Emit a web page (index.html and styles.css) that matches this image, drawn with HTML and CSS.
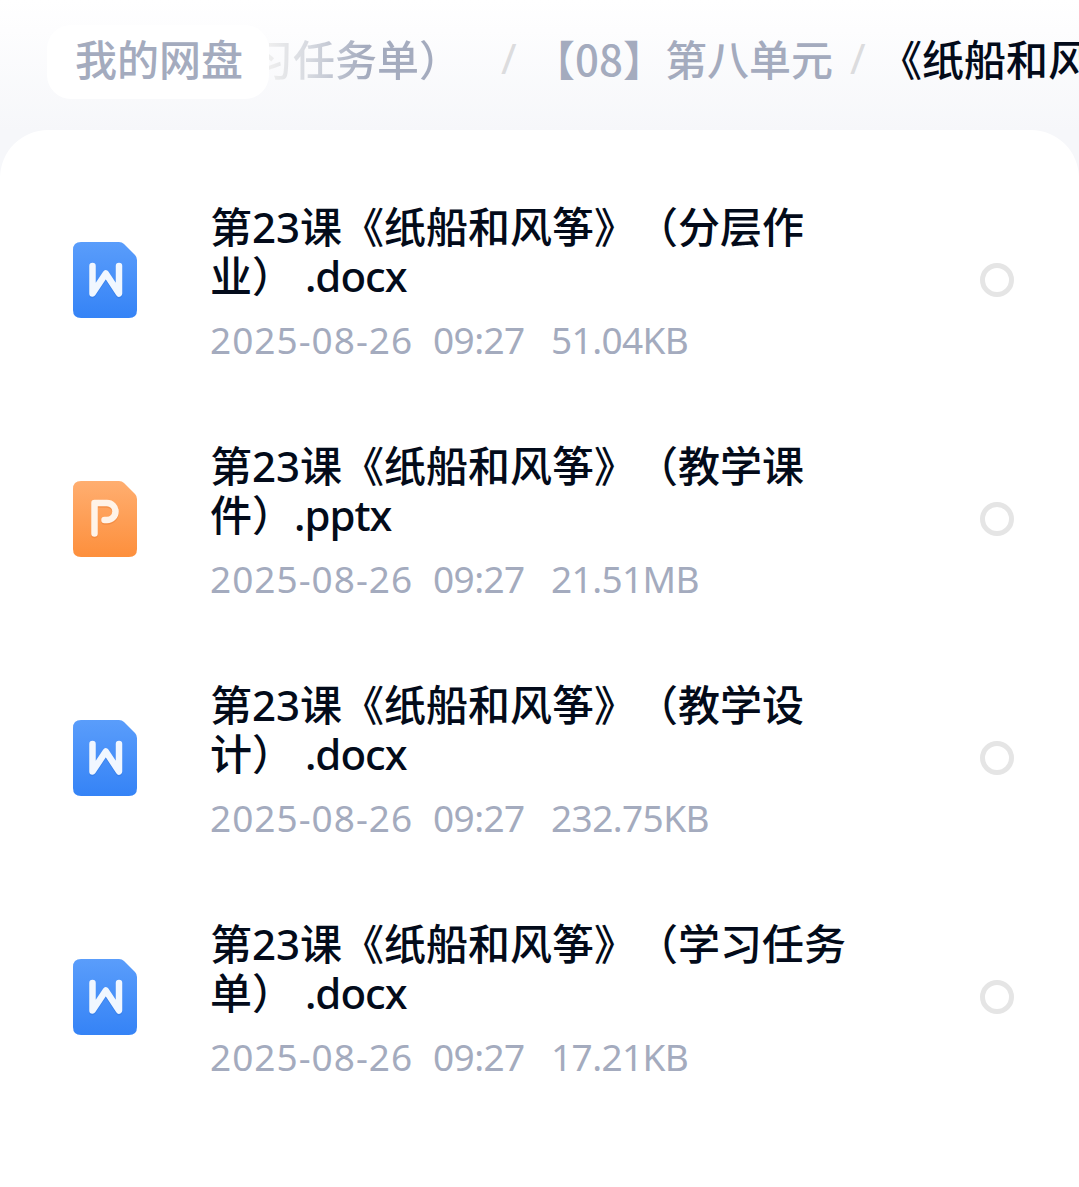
FILE: index.html
```
<!DOCTYPE html>
<html lang="zh-CN">
<head>
	<meta charset="UTF-8">
	<title>我的网盘</title>
	<link rel="stylesheet" href="styles.css">
</head>
<body>
<!-- 图标定义 -->
<svg class="defs" width="0" height="0">
	<defs>
		<linearGradient id="blue" x1="0" y1="0" x2="0" y2="1">
			<stop offset="0" stop-color="#5a9dfb"/>
			<stop offset="1" stop-color="#3583f6"/>
		</linearGradient>
		<linearGradient id="orange" x1="0" y1="0" x2="0" y2="1">
			<stop offset="0" stop-color="#ffae70"/>
			<stop offset="1" stop-color="#fd8f3c"/>
		</linearGradient>
	</defs>
	<symbol id="doc" viewBox="0 0 64 76">
		<path fill="url(#blue)" d="M8 0H46Q49 0 51 2L62 13Q64 15 64 18V68Q64 76 56 76H8Q0 76 0 68V8Q0 0 8 0Z"/>
		<path class="shade" d="M19.500 25.500V53L32.800 33L46 53V25.500"/>
		<path class="letter" d="M19.500 24V51.500L32.800 31.500L46 51.500V24"/>
	</symbol>
	<symbol id="ppt" viewBox="0 0 64 76">
		<path fill="url(#orange)" d="M8 0H46Q49 0 51 2L62 13Q64 15 64 18V68Q64 76 56 76H8Q0 76 0 68V8Q0 0 8 0Z"/>
		<path class="shade orange" d="M21.500 54V23.500H34A8.500 8.500 0 0 1 34 40.500H31.500"/>
		<path class="letter warm" d="M21.500 52.500V22H34A8.500 8.500 0 0 1 34 39H31.500"/>
	</symbol>
</svg>

<div class="crumbs">
	<div class="root">我的网盘</div>
	<div class="path">
		<span class="crumb faded">习任务单）</span>
		<span class="sep">/</span>
		<span class="crumb">【08】第八单元</span>
		<span class="sep">/</span>
		<span class="crumb current">《纸船和风筝》</span>
	</div>
</div>

<div class="list">
	<div class="item">
		<svg class="icon"><use href="#doc"/></svg>
		<div class="info">
			<p class="name">第23课《纸船和风筝》（分层作业） <span class="ext">.docx</span></p>
			<p class="meta"><span class="date">2025-08-26</span><span class="time">09:27</span><span>51.04KB</span></p>
		</div>
		<i class="check"></i>
	</div>
	<div class="item">
		<svg class="icon"><use href="#ppt"/></svg>
		<div class="info">
			<p class="name">第23课《纸船和风筝》（教学课件）<span class="ext">.pptx</span></p>
			<p class="meta"><span class="date">2025-08-26</span><span class="time">09:27</span><span>21.51MB</span></p>
		</div>
		<i class="check"></i>
	</div>
	<div class="item">
		<svg class="icon"><use href="#doc"/></svg>
		<div class="info">
			<p class="name">第23课《纸船和风筝》（教学设计） <span class="ext">.docx</span></p>
			<p class="meta"><span class="date">2025-08-26</span><span class="time">09:27</span><span>232.75KB</span></p>
		</div>
		<i class="check"></i>
	</div>
	<div class="item">
		<svg class="icon"><use href="#doc"/></svg>
		<div class="info">
			<p class="name">第23课《纸船和风筝》（学习任务单） <span class="ext">.docx</span></p>
			<p class="meta"><span class="date">2025-08-26</span><span class="time">09:27</span><span>17.21KB</span></p>
		</div>
		<i class="check"></i>
	</div>
</div>
</body>
</html>
```
FILE: styles.css
```
html,body{
	padding: 0;
	margin: 0;
}
body{
	height: 1187px;
	overflow: hidden;
	background: linear-gradient(#fff 0, #fdfdfe 30px, #f6f7fa 130px, #f6f7fb 100%);
	font-family: "Noto Sans", "Noto Sans CJK SC", sans-serif;
	text-spacing-trim: space-all;
}
.defs{
	position: absolute;
}
/* 面包屑 */
.crumbs{
	display: flex;
	align-items: center;
	height: 74px;
	padding: 25px 0 31px 47px;
	overflow: hidden;
	font-family: "Noto Sans CJK SC", sans-serif;
	font-size: 42px;
	font-weight: 500;
	line-height: 66px;
	color: #a4abbe;
	white-space: nowrap;
}
.root{
	flex: none;
	box-sizing: border-box;
	width: 222px;
	height: 74px;
	padding-left: 28px;
	border-radius: 24px;
	background-color: #fff;
}
.path{
	display: flex;
	flex: 1;
	height: 74px;
	min-width: 0;
	overflow: hidden;
}
.crumb{
	flex: none;
}
.faded{
	margin-left: -18px;
	background: linear-gradient(90deg, #eee 18px, #d5d8df 60px, #a4abbe 115px);
	-webkit-background-clip: text;
	background-clip: text;
	color: transparent;
}
.current{
	color: #030b1a;
}
.sep{
	flex: none;
	width: 16px;
	margin: 0 16px 0 40px;
	font-family: "Noto Sans", sans-serif;
	font-weight: 400;
	color: #dcdcde;
}
.crumb + .sep ~ .sep{
	margin: 0 14px 0 17px;
}
/* 文件列表 */
.list{
	height: 1027px;
	padding-top: 30px;
	border-radius: 48px 48px 0 0;
	background-color: #fff;
}
.item{
	display: flex;
	align-items: center;
	height: 239px;
	padding: 0 65px 0 73px;
}
.icon{
	flex: none;
	width: 64px;
	height: 76px;
}
.letter,.shade{
	fill: none;
	stroke: #f1f7ff;
	stroke-width: 6.5;
	stroke-linecap: round;
	stroke-linejoin: round;
}
.warm{
	stroke: #fff3e8;
}
.shade{
	stroke: #2f74dc;
	opacity: .45;
}
.shade.orange{
	stroke: #e87b30;
}
.info{
	width: 650px;
	padding-top: 6px;
	margin: 0 auto 0 73px;
}
.name{
	margin: 0;
	font-size: 42px;
	font-weight: 500;
	line-height: 49px;
	color: #030b1a;
}
.ext{
	letter-spacing: -1px;
}
.meta{
	display: flex;
	margin: 17px 0 0;
	font-size: 37px;
	line-height: 46px;
	letter-spacing: -.6px;
	color: #a4abbe;
}
.date{
	width: 223px;
	letter-spacing: 1px;
}
.time{
	width: 118px;
}
.check{
	box-sizing: border-box;
	width: 34px;
	height: 34px;
	border: 5px solid #e5e5e5;
	border-radius: 50%;
}
```
